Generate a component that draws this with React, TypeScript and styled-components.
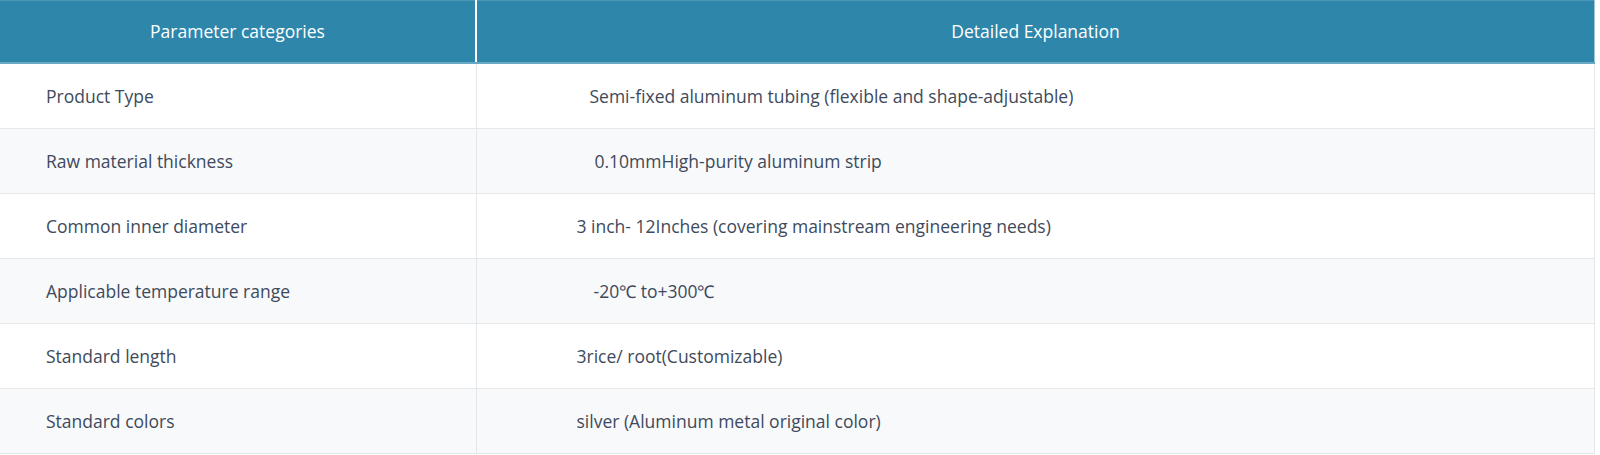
import { createGlobalStyle } from 'styled-components';
import styled from 'styled-components';

const GlobalStyle = createGlobalStyle`
    body {
        margin: 0;
        background: #ffffff;
        font-family: "Open Sans", "Liberation Sans", Arial, sans-serif;
    }
`;

const Table = styled.table`
    width: 1595px;
    border-collapse: collapse;
    table-layout: fixed;
    font-size: 17.5px;
    line-height: 1.3;
`;

const HeadCell = styled.th`
    height: 61px;
    padding: 0;
    background: #2e87ab;
    color: #ffffff;
    font-weight: normal;
    text-align: center;
    border-top: 1px solid #4a97b6;
    border-bottom: 2px solid #6aa9c4;
    border-left: 2px solid #ffffff;
    &:first-child {
        border-left: none;
    }
    &:last-child {
        border-right: 1px solid #9cc6d8;
    }
`;

const Row = styled.tr<{ $striped?: boolean }>`
    background: ${(p) => (p.$striped ? '#f8f9fb' : '#ffffff')};
`;

const Cell = styled.td<{ $pad: number }>`
    height: 64px;
    padding: 0 0 0 ${(p) => p.$pad}px;
    color: #3e4a5b;
    text-align: left;
    border-bottom: 1px solid #e6e7e9;
    border-left: 1px solid #e6e7e9;
    &:first-child {
        border-left: none;
    }
    &:last-child {
        border-right: 1px solid #e6e7e9;
    }
`;

const rows = [
    { name: 'Product Type', detail: 'Semi-fixed aluminum tubing (flexible and shape-adjustable)', indent: 13 },
    { name: 'Raw material thickness', detail: '0.10mmHigh-purity aluminum strip', indent: 18 },
    { name: 'Common inner diameter', detail: '3 inch- 12Inches (covering mainstream engineering needs)', indent: 0 },
    { name: 'Applicable temperature range', detail: '-20℃ to+300℃', indent: 17 },
    { name: 'Standard length', detail: '3rice/ root(Customizable)', indent: 0 },
    { name: 'Standard colors', detail: 'silver (Aluminum metal original color)', indent: 0 },
];

export default function App() {
    return (
        <>
            <GlobalStyle />
            <Table>
                <colgroup>
                    <col style={{ width: 476 }} />
                    <col />
                </colgroup>
                <thead>
                    <tr>
                        <HeadCell>Parameter categories</HeadCell>
                        <HeadCell>Detailed Explanation</HeadCell>
                    </tr>
                </thead>
                <tbody>
                    {rows.map((r, i) => (
                        <Row key={r.name} $striped={i % 2 === 1}>
                            <Cell $pad={46}>{r.name}</Cell>
                            <Cell $pad={100 + r.indent}>{r.detail}</Cell>
                        </Row>
                    ))}
                </tbody>
            </Table>
        </>
    );
}
